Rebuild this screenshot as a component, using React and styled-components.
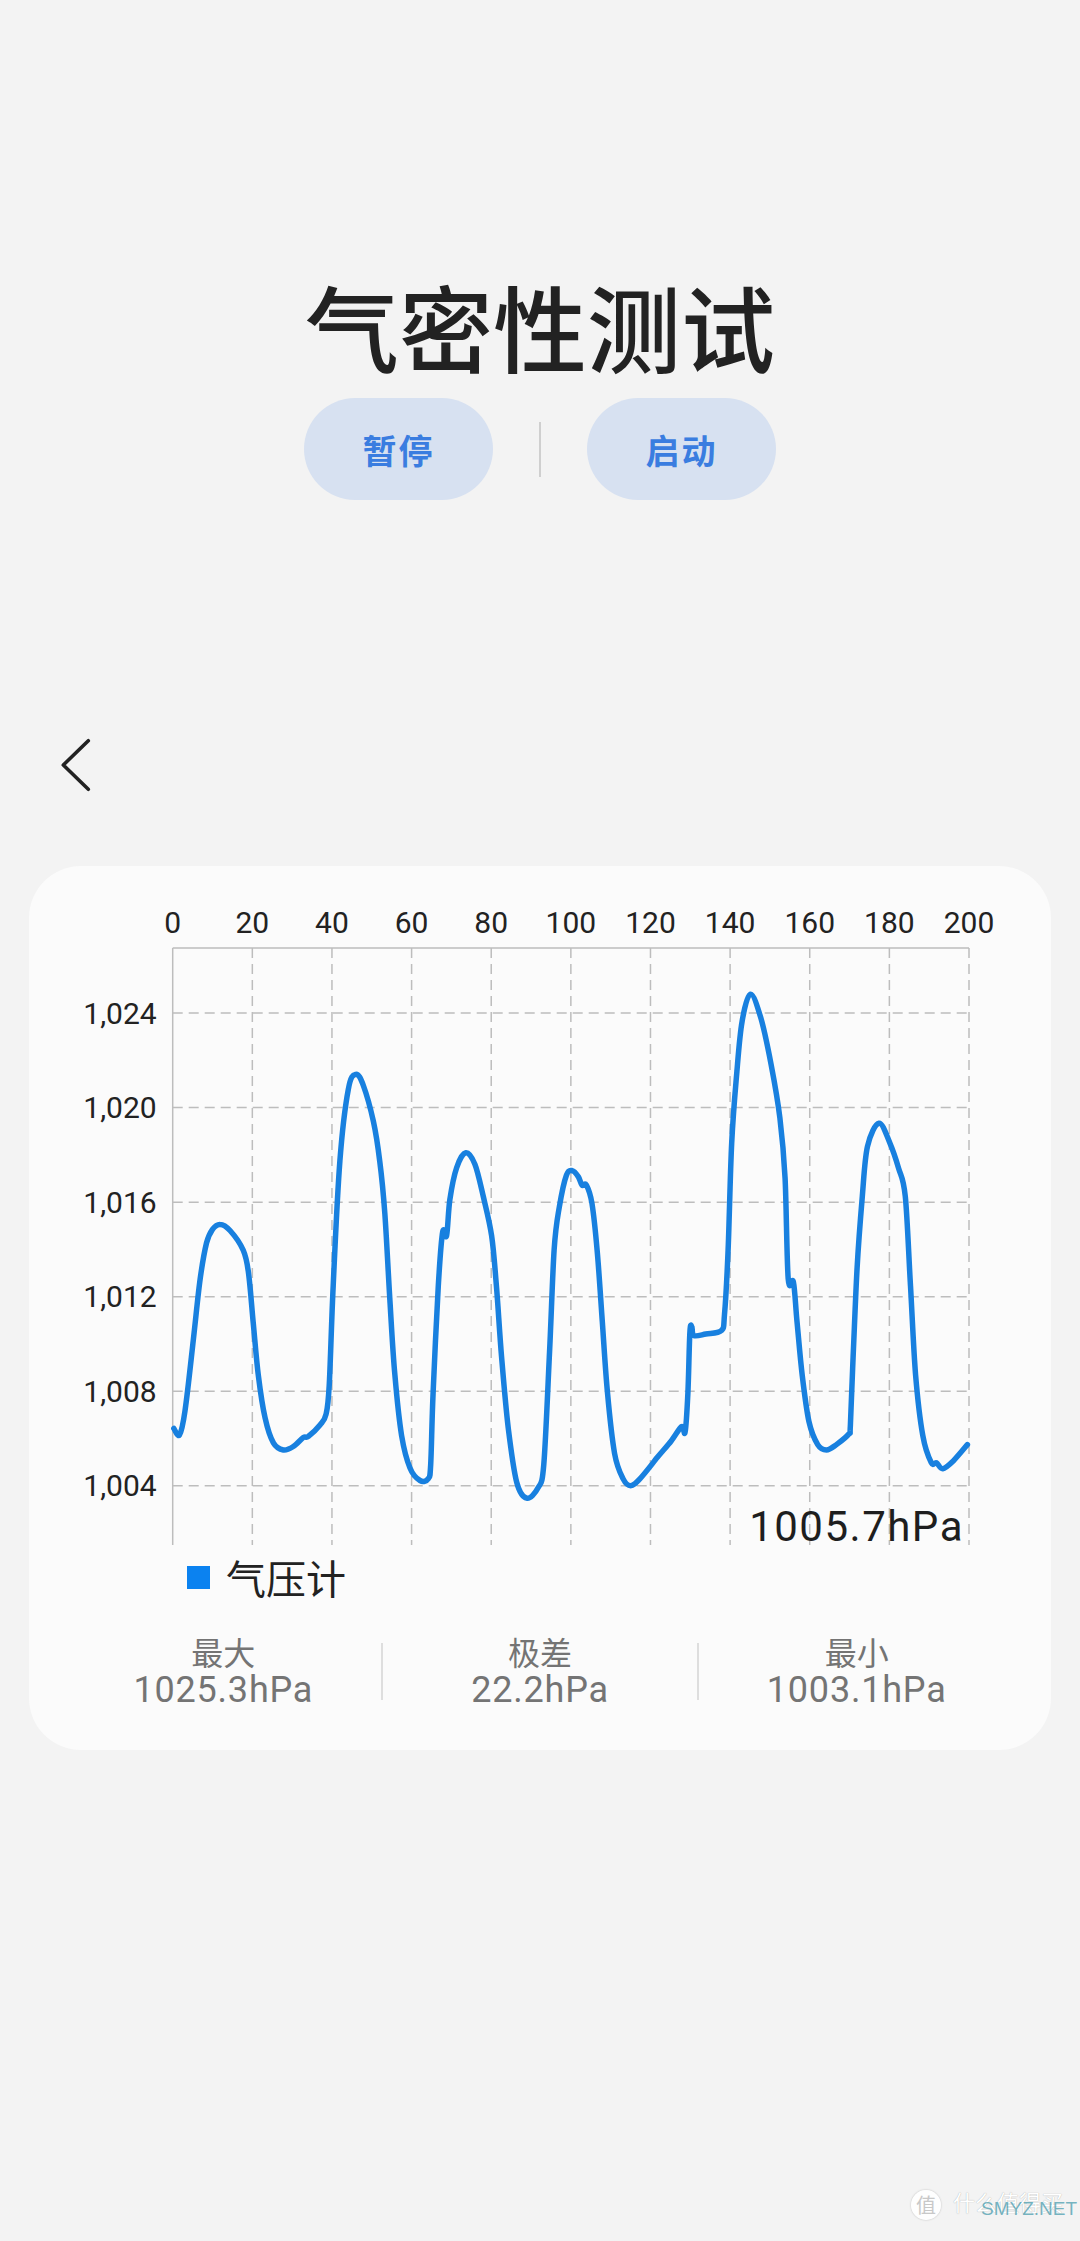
import styled, { createGlobalStyle } from "styled-components";

const GlobalStyle = createGlobalStyle`
  html, body {
    margin: 0;
    padding: 0;
    background: #f3f3f3;
  }
  body {
    font-family: Roboto, "Noto Sans CJK SC", sans-serif;
  }
`;

const Page = styled.div`
  position: relative;
  min-height: 2241px;
  box-sizing: border-box;
  padding-top: 278px;
  background: #f3f3f3;
  display: flex;
  flex-direction: column;
  align-items: center;
  overflow: hidden;
`;

const Title = styled.h1`
  margin: 0;
  font-family: "Noto Sans CJK SC", sans-serif;
  font-size: 94px;
  line-height: 94px;
  font-weight: 500;
  color: #222;
`;

const ButtonRow = styled.div`
  margin-top: 26px;
  display: flex;
  align-items: center;
  gap: 46px;
`;

const Pill = styled.button`
  width: 189px;
  height: 102px;
  border: none;
  border-radius: 51px;
  background: #d7e1f1;
  color: #3a7de0;
  font-family: "Noto Sans CJK SC", sans-serif;
  font-size: 34px;
  font-weight: 700;
  letter-spacing: 2px;
  padding: 0;
  cursor: pointer;
`;

const Divider = styled.div`
  width: 2px;
  height: 55px;
  background: #cfcfcf;
`;

const BackRow = styled.div`
  align-self: stretch;
  margin-top: 235px;
  height: 60px;
  padding-left: 56px;
`;

const Card = styled.section`
  margin-top: 71px;
  width: 1022px;
  border-radius: 52px;
  background: #fbfbfb;
  padding-bottom: 40px;
`;

const ChartSvg = styled.svg`
  display: block;
  font-family: Roboto, "Liberation Sans", sans-serif;
`;

const GridLine = styled.line`
  stroke: #bdbdbd;
  stroke-width: 1.5;
  stroke-dasharray: ${(p) => (p.$solid ? "none" : "10 6")};
`;

const AxisLabel = styled.text`
  font-size: 30px;
  fill: #222;
`;

const CurrentValue = styled.text`
  font-size: 42px;
  letter-spacing: 1.5px;
  fill: #1e1e1e;
`;

const Legend = styled.div`
  height: 42px;
  padding-left: 158px;
  display: flex;
  align-items: center;
  gap: 16px;
`;

const LegendSwatch = styled.span`
  width: 23px;
  height: 23px;
  background: #0b82f0;
`;

const LegendText = styled.span`
  font-family: "Noto Sans CJK SC", sans-serif;
  font-size: 40px;
  line-height: 42px;
  color: #222;
`;

const Stats = styled.div`
  margin-top: 34px;
  padding: 0 37px;
  display: flex;
  align-items: center;
`;

const Stat = styled.div`
  flex: 1;
  display: flex;
  flex-direction: column;
  align-items: center;
  color: #747474;
`;

const StatLabel = styled.span`
  font-family: "Noto Sans CJK SC", sans-serif;
  font-size: 32px;
  line-height: 38px;
`;

const StatValue = styled.span`
  font-family: Roboto, sans-serif;
  font-size: 36px;
  line-height: 40px;
  letter-spacing: 0.8px;
`;

const StatDivider = styled.div`
  width: 2px;
  height: 57px;
  background: #dedede;
`;

const Watermark = styled.div`
  position: absolute;
  right: 13px;
  bottom: 19px;
  width: 156px;
  height: 34px;
`;

const Badge = styled.span`
  position: absolute;
  left: 0;
  top: 2px;
  width: 30px;
  height: 30px;
  border-radius: 50%;
  background: rgba(255, 255, 255, 0.9);
  box-shadow: 0 0 2px rgba(0, 0, 0, 0.25);
  color: #c8c8c8;
  font-family: "Noto Sans CJK SC", sans-serif;
  font-size: 20px;
  line-height: 30px;
  text-align: center;
`;

const MarkText = styled.span`
  position: absolute;
  left: 42px;
  top: 0;
  font-family: "Noto Sans CJK SC", sans-serif;
  font-size: 22px;
  line-height: 26px;
  color: #fff;
  text-shadow: 0 0 1px rgba(0, 0, 0, 0.35);
  white-space: nowrap;
`;

const MarkSite = styled.span`
  position: absolute;
  left: 70px;
  top: 10px;
  font-family: "Liberation Sans", sans-serif;
  font-size: 19px;
  line-height: 22px;
  color: rgba(60, 150, 170, 0.7);
  white-space: nowrap;
`;

const W = 1022;
const H = 690;
const X0 = 143.7;
const X1 = 940;
const Y0 = 82;
const YB = 679;
const sx = (u) => X0 + (u * (X1 - X0)) / 200;
const sy = (h) => 619.7 - (h - 1004) * 23.63;

const data = [
  [0.3, 1006.42], [1.7, 1006.15], [3.1, 1007.17], [5.2, 1010.2], [6.9, 1012.76],
  [8.5, 1014.27], [10, 1014.85], [11.9, 1015.06], [14.4, 1014.8], [17.7, 1013.97],
  [19, 1013.07], [20.2, 1010.95], [21.5, 1008.68], [23.2, 1006.87], [25.3, 1005.81],
  [27.8, 1005.51], [30.3, 1005.66], [32.8, 1006.04], [34.1, 1006.09], [37, 1006.57],
  [38.5, 1007.02], [39.3, 1008.23], [40.3, 1012.46], [42, 1017.75], [44.1, 1020.77],
  [46, 1021.41], [47.9, 1020.93], [50.4, 1019.42], [52, 1017.75], [53.3, 1015.48],
  [54.6, 1011.71], [55.8, 1008.68], [57.5, 1006.12], [59.6, 1004.75], [62.1, 1004.22],
  [64.2, 1004.3], [64.8, 1004.9], [65.4, 1007.93], [66.7, 1012.46], [67.8, 1014.73],
  [68.8, 1014.58], [69.6, 1016.09], [71.3, 1017.45], [73.6, 1018.09], [75.9, 1017.6],
  [78, 1016.24], [80.1, 1014.58], [81.3, 1012.46], [82.6, 1009.44], [84.3, 1006.42],
  [86.4, 1004.15], [88.9, 1003.47], [91.8, 1003.92], [93.2, 1004.9], [94.6, 1009.44],
  [95.8, 1013.97], [97.1, 1015.79], [98.9, 1017.15], [100.4, 1017.33], [101.9, 1017.07],
  [102.8, 1016.72], [103.9, 1016.72], [105.3, 1015.94], [106.6, 1013.97], [107.9, 1010.95],
  [109.2, 1007.93], [111, 1005.36], [113.1, 1004.3], [115, 1004.0], [117.4, 1004.3],
  [121.8, 1005.21], [125.2, 1005.89], [127.8, 1006.5], [128.7, 1006.27], [129.4, 1007.93],
  [129.9, 1010.5], [130.4, 1010.72], [130.9, 1010.35], [133.9, 1010.42], [137.8, 1010.57],
  [138.6, 1011.25], [139.5, 1013.97], [140.4, 1018.51], [141.7, 1021.53], [143, 1023.65],
  [145.1, 1024.8], [147.7, 1023.8], [150.3, 1021.83], [152.5, 1019.56], [153.8, 1017.0],
  [154.6, 1012.76], [155.9, 1012.62], [156.8, 1010.95], [158.1, 1008.68], [159.8, 1006.72],
  [162, 1005.74], [164.2, 1005.51], [166.7, 1005.74], [169.8, 1006.19], [170.2, 1006.57],
  [170.9, 1009.44], [171.9, 1013.22], [173.2, 1016.24], [174.5, 1018.36], [177.4, 1019.34],
  [180.1, 1018.51], [182.3, 1017.45], [184, 1016.24], [185.3, 1012.46], [186.6, 1008.68],
  [188.4, 1006.12], [190.5, 1004.98], [191.8, 1004.97], [193.4, 1004.72], [196.1, 1005.06],
  [199.6, 1005.74],
];

// catmull-rom -> cubic bezier
function smoothPath(pts) {
  let d = `M${pts[0][0].toFixed(1)},${pts[0][1].toFixed(1)}`;
  for (let i = 0; i < pts.length - 1; i++) {
    const p0 = pts[i - 1] || pts[i];
    const p1 = pts[i];
    const p2 = pts[i + 1];
    const p3 = pts[i + 2] || p2;
    const c1x = p1[0] + (p2[0] - p0[0]) / 6;
    const c1y = p1[1] + (p2[1] - p0[1]) / 6;
    const c2x = p2[0] - (p3[0] - p1[0]) / 6;
    const c2y = p2[1] - (p3[1] - p1[1]) / 6;
    d += ` C${c1x.toFixed(1)},${c1y.toFixed(1)} ${c2x.toFixed(1)},${c2y.toFixed(1)} ${p2[0].toFixed(1)},${p2[1].toFixed(1)}`;
  }
  return d;
}

const xTicks = [0, 20, 40, 60, 80, 100, 120, 140, 160, 180, 200];
const yTicks = [1004, 1008, 1012, 1016, 1020, 1024];

function PressureChart() {
  const path = smoothPath(data.map(([u, h]) => [sx(u), sy(h)]));
  return (
    <ChartSvg width={W} height={H} viewBox={`0 0 ${W} ${H}`}>
      {xTicks.map((t) => (
        <AxisLabel key={`xl${t}`} x={sx(t)} y={66.5} textAnchor="middle">
          {t}
        </AxisLabel>
      ))}
      {yTicks.map((t) => (
        <AxisLabel key={`yl${t}`} x={127.7} y={sy(t) + 10.5} textAnchor="end">
          {t.toLocaleString("en-US")}
        </AxisLabel>
      ))}
      {yTicks.map((t) => (
        <GridLine key={`hg${t}`} x1={X0} x2={X1} y1={sy(t)} y2={sy(t)} />
      ))}
      {xTicks.slice(1).map((t) => (
        <GridLine key={`vg${t}`} x1={sx(t)} x2={sx(t)} y1={Y0} y2={YB} />
      ))}
      <GridLine $solid x1={X0} x2={X1} y1={Y0} y2={Y0} />
      <GridLine $solid x1={X0} x2={X0} y1={Y0} y2={YB} />
      <path
        d={path}
        fill="none"
        stroke="#1880df"
        strokeWidth="5.5"
        strokeLinejoin="round"
        strokeLinecap="round"
      />
      <CurrentValue x={935} y={675} textAnchor="end">
        1005.7hPa
      </CurrentValue>
    </ChartSvg>
  );
}

const stats = [
  { label: "最大", value: "1025.3hPa" },
  { label: "极差", value: "22.2hPa" },
  { label: "最小", value: "1003.1hPa" },
];

export default function App() {
  return (
    <>
      <GlobalStyle />
      <Page>
        <Title>气密性测试</Title>
        <ButtonRow>
          <Pill>暂停</Pill>
          <Divider />
          <Pill>启动</Pill>
        </ButtonRow>

        <BackRow>
          <svg width="40" height="60" viewBox="0 0 40 60">
            <polyline
              points="32.3,5.7 7.3,30 32.3,54.3"
              fill="none"
              stroke="#222"
              strokeWidth="3.6"
              strokeLinecap="round"
              strokeLinejoin="round"
            />
          </svg>
        </BackRow>

        <Card>
          <PressureChart />
          <Legend>
            <LegendSwatch />
            <LegendText>气压计</LegendText>
          </Legend>
          <Stats>
            {stats.map((s, i) => (
              <>
                {i > 0 && <StatDivider key={`d${i}`} />}
                <Stat key={s.label}>
                  <StatLabel>{s.label}</StatLabel>
                  <StatValue>{s.value}</StatValue>
                </Stat>
              </>
            ))}
          </Stats>
        </Card>

        <Watermark>
          <Badge>值</Badge>
          <MarkText>什么值得买</MarkText>
          <MarkSite>SMYZ.NET</MarkSite>
        </Watermark>
      </Page>
    </>
  );
}
